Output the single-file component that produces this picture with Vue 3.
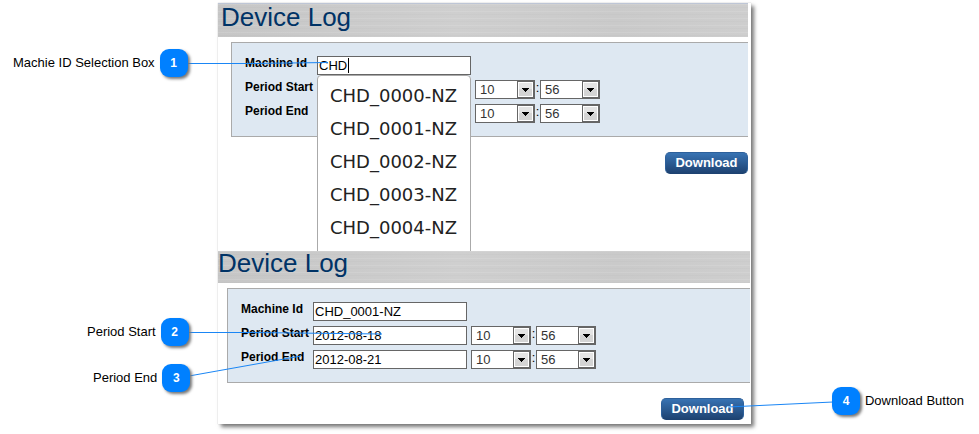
<script setup>
import { ref, reactive } from 'vue'

const machines = ['CHD_0000-NZ', 'CHD_0001-NZ', 'CHD_0002-NZ', 'CHD_0003-NZ', 'CHD_0004-NZ']

const forms = reactive([
  {
    id: 'search',
    machine: 'CHD',
    open: true,
    periods: [
      { key: 'start', label: 'Period Start', date: '', hour: '10', minute: '56' },
      { key: 'end', label: 'Period End', date: '', hour: '10', minute: '56' },
    ],
  },
  {
    id: 'filled',
    machine: 'CHD_0001-NZ',
    open: false,
    periods: [
      { key: 'start', label: 'Period Start', date: '2012-08-18', hour: '10', minute: '56' },
      { key: 'end', label: 'Period End', date: '2012-08-21', hour: '10', minute: '56' },
    ],
  },
])

const callouts = ref([
  { n: 1, text: 'Machie ID Selection Box' },
  { n: 2, text: 'Period Start' },
  { n: 3, text: 'Period End' },
  { n: 4, text: 'Download Button' },
])
</script>

<template>
  <main class="page">
    <div class="panel">
      <section v-for="form in forms" :key="form.id" class="log" :class="form.id">
        <h1 class="title">Device Log</h1>
        <form @submit.prevent>
          <div class="fields">
            <label :for="form.id + '-machine'">Machine Id</label>
            <div class="combo">
              <input :id="form.id + '-machine'" v-model="form.machine" type="text" autocomplete="off" />
              <span v-if="form.open" class="caret"></span>
              <ul v-if="form.open" class="menu">
                <li v-for="m in machines" :key="m">{{ m }}</li>
              </ul>
            </div>
            <template v-for="p in form.periods" :key="p.key">
              <label :for="form.id + '-' + p.key">{{ p.label }}</label>
              <input :id="form.id + '-' + p.key" v-model="p.date" type="text" />
              <div class="time">
                <template v-for="part in ['hour', 'minute']" :key="part">
                  <span v-if="part === 'minute'" class="colon">:</span>
                  <span class="pick">
                    <select v-model="p[part]" :aria-label="p.label + ' ' + part">
                      <option>{{ p[part] }}</option>
                    </select>
                    <svg width="18" height="19" viewBox="0 0 18 19" aria-hidden="true">
                      <rect width="18" height="19" fill="#666" />
                      <rect x="1" y="2" width="15" height="15" fill="#fff" />
                      <rect x="2" y="3" width="13" height="13" fill="#e4e4e4" />
                      <rect x="2" y="9" width="13" height="7" fill="#d4d4d4" />
                      <path d="M5 8h7v1h-1v1h-1v1H9v1H8v-1H7v-1H6V9H5z" fill="#000" />
                    </svg>
                  </span>
                </template>
              </div>
            </template>
          </div>
          <button class="download" type="submit">Download</button>
        </form>
      </section>
    </div>

    <svg class="lines left" width="400" height="434" aria-hidden="true">
      <path d="M187 63.500L250 63.500L328 62.500M188 332.500L250 332.500L382 334M189 376L301 356" />
    </svg>
    <svg class="lines right" width="260" height="434" aria-hidden="true">
      <path d="M9 407L114 402" />
    </svg>

    <div v-for="c in callouts" :key="c.n" class="callout" :class="'c' + c.n">
      <span class="badge">{{ c.n }}</span>
      <span>{{ c.text }}</span>
    </div>
  </main>
</template>

<style>
body {
  margin: 0;
  background: #fff;
}
</style>

<style scoped>
.page {
  position: relative;
  padding: 3px 228px 10px 218px;
  font: 13px/16px "Liberation Sans", Arial, sans-serif;
  color: #000;
}
.panel {
  background: #fff;
  box-shadow: 3px 3px 4px #777, 0 0 1px #bbb;
}
.log {
  position: relative;
}
.search {
  overflow: hidden;
  padding: 0 3px 77px 0;
}
.filled {
  padding: 0 1px 4px 0;
}
.title {
  margin: 0 0 5px;
  padding: 0 0 8px;
  font-size: 26px;
  font-weight: 400;
  line-height: 24px;
  color: #003366;
  background:
    repeating-linear-gradient(180deg, rgba(255, 255, 255, 0.1) 0 1px, transparent 1px 3px, rgba(0, 0, 0, 0.015) 3px 4px, transparent 4px 7px),
    linear-gradient(90deg, #c6c6c6, #cfcfcf 45%, #cacaca 75%, #cecece);
}
.search .title {
  padding: 1px 3px 8px;
  border-top: 1px solid #bec6d6;
}
form {
  display: flex;
  flex-direction: column;
  gap: 15px;
}
.fields {
  display: grid;
  grid-template-columns: 72px 154px 1fr;
  gap: 5px 0;
  padding: 13px;
  margin-left: 9px;
  background: #dee8f2;
  border: 1px solid #aaa;
  border-right: 0;
}
.search .fields {
  margin-left: 13px;
}
label {
  grid-column: 1;
  font-size: 12px;
  font-weight: 700;
  line-height: 14px;
  white-space: nowrap;
}
input,
select {
  box-sizing: border-box;
  display: block;
  width: 100%;
  height: 19px;
  margin: 0;
  border: 1px solid #666;
  border-radius: 0;
  background: #fff;
  color: #000;
  font: 13px/15px "Liberation Sans", Arial, sans-serif;
}
input {
  padding: 0 1px;
}
select {
  appearance: none;
  padding: 0 18px 0 4px;
  color: #333;
}
.combo {
  position: relative;
}
.caret {
  position: absolute;
  left: 31px;
  top: 2px;
  width: 1px;
  height: 15px;
  background: #000;
}
.menu {
  position: absolute;
  z-index: 1;
  top: 19px;
  left: 0;
  right: 0;
  margin: 0;
  padding: 3px 0 40px 12px;
  list-style: none;
  background: #fff;
  border: 1px solid #aaa;
  border-radius: 4px;
  color: #222;
  font: 18px/33px "DejaVu Sans", Verdana, sans-serif;
}
.time {
  display: flex;
  padding-left: 4px;
}
.pick {
  position: relative;
  width: 60px;
}
.pick svg {
  position: absolute;
  top: 0;
  right: 0;
  pointer-events: none;
}
.colon {
  width: 5px;
  text-align: center;
}
.download {
  align-self: flex-end;
  width: 83px;
  height: 22px;
  padding: 0;
  border: 1px solid #2d609b;
  border-bottom-color: #1d4271;
  border-radius: 5px;
  background: linear-gradient(#3873b3, #1e4372);
  color: #fff;
  font: 700 13px/18px "Liberation Sans", Arial, sans-serif;
}
.filled .download {
  margin-right: 6px;
}
.lines {
  position: absolute;
  z-index: 2;
  top: 0;
  pointer-events: none;
  fill: none;
  stroke: #1a86f5;
  stroke-width: 1;
}
.lines.left {
  left: 0;
}
.lines.right {
  right: 0;
}
.callout {
  position: absolute;
  z-index: 3;
  display: flex;
  flex-direction: row-reverse;
  align-items: center;
  gap: 5px;
  white-space: nowrap;
}
.badge {
  width: 28px;
  height: 28px;
  border-radius: 9px;
  background: #0080ff;
  box-shadow: 2px 2px 3px #777;
  color: #fff;
  font-weight: 700;
  font-size: 12px;
  line-height: 28px;
  text-align: center;
}
.c1 {
  top: 49px;
  left: 13px;
}
.c2 {
  top: 318px;
  left: 87px;
}
.c3 {
  top: 364px;
  left: 93px;
}
.c4 {
  top: 387px;
  right: 15px;
  flex-direction: row;
}
</style>
